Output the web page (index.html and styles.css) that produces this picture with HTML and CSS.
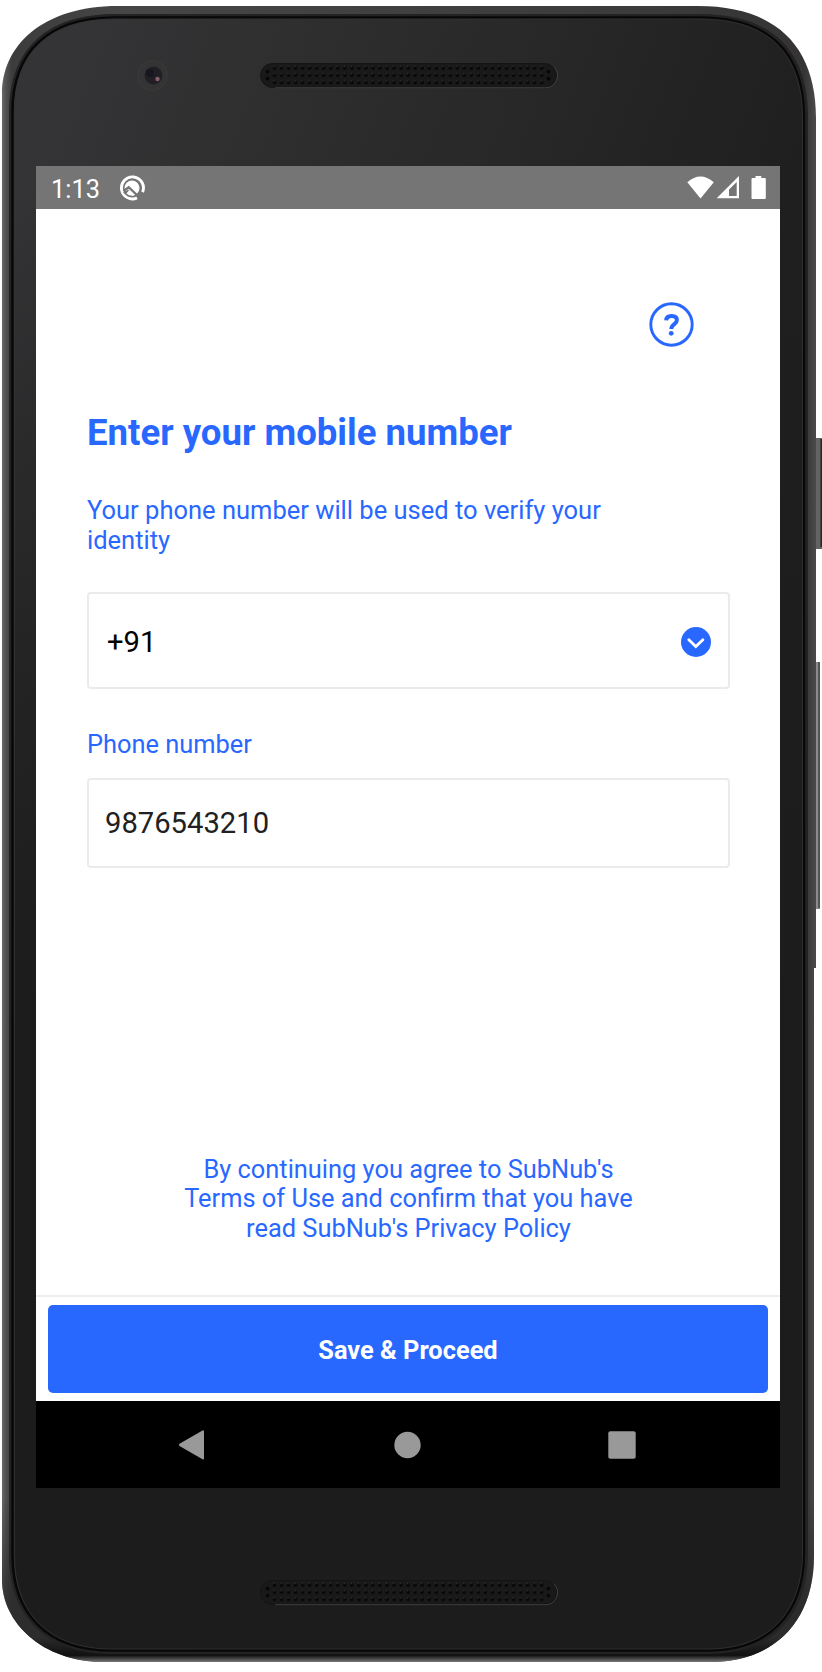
FILE: index.html
```html
<!DOCTYPE html>
<html lang="en">
<head>
<meta charset="utf-8">
<title>SubNub</title>
<link rel="stylesheet" href="styles.css">
</head>
<body>
<div class="phone">
  <svg class="shell" width="822" height="1672" viewBox="0 0 822 1672" aria-hidden="true">
    <defs>
      <linearGradient id="rim" x1="0" y1="0" x2="1" y2="0">
        <stop offset="0" stop-color="#6a6a6a"/><stop offset=".004" stop-color="#555556"/><stop offset=".012" stop-color="#3c3c3d"/>
        <stop offset=".15" stop-color="#464647"/><stop offset=".8" stop-color="#3b3b3b"/><stop offset=".985" stop-color="#353334"/><stop offset="1" stop-color="#4b4b4b"/>
      </linearGradient>
      <linearGradient id="low" x1="0" y1="0" x2="0" y2="1">
        <stop offset=".9" stop-color="#222" stop-opacity="0"/><stop offset=".985" stop-color="#2c2c2c"/><stop offset=".996" stop-color="#111"/><stop offset="1" stop-color="#777"/>
      </linearGradient>
      <linearGradient id="face" gradientUnits="userSpaceOnUse" x1="100" y1="0" x2="760" y2="260">
        <stop offset="0" stop-color="#343436"/><stop offset=".5" stop-color="#2a2a2a"/><stop offset="1" stop-color="#1f1f1f"/>
      </linearGradient>
      <linearGradient id="fade" x1="0" y1="0" x2="0" y2="1">
        <stop offset=".1" stop-color="#1c1c1c" stop-opacity="0"/><stop offset=".6" stop-color="#1c1c1c"/>
      </linearGradient>
      <pattern id="holes" x="271" y="0" width="7.03" height="7.2" patternUnits="userSpaceOnUse">
        <circle cx="3.5" cy="3.6" r="1.9" fill="#070707"/><circle cx="3" cy="2" r=".7" fill="#3a3a3a"/>
      </pattern>
      <g id="speaker">
        <rect x="260.5" y=".5" width="296" height="24" rx="12" fill="#191919" stroke="#141414"/>
        <path d="M275 24.700H544.500A12.200 12.200 0 0 0 554 4" fill="none" stroke="#484848" stroke-width=".8"/>
        <g transform="translate(0 1.500)"><rect x="271" y="0" width="274.100" height="21.600" fill="url(#holes)"/></g>
        <g fill="#070707"><circle cx="267.500" cy="8.700" r="1.900"/><circle cx="267.500" cy="15.700" r="1.900"/><circle cx="548.500" cy="8.700" r="1.900"/><circle cx="548.500" cy="15.700" r="1.900"/></g>
      </g>
    </defs>
    <path d="M815 438h7v111h-7z" fill="#636363"/><path d="M820.500 439h1.500v108h-1.500z" fill="#252525"/>
    <path d="M815 662h5v247h-5z" fill="#8c8c8c"/><path d="M818 662h2v246h-2z" fill="#555"/>
    <path d="M118 6H698C776 6 816 46 816 118V968H814V1556C814 1622 774 1662 710 1662H104C42 1662 2 1622 2 1580V94C2 46 42 6 118 6Z" fill="url(#rim)"/>
    <path d="M118 6H698C776 6 816 46 816 118V968H814V1556C814 1622 774 1662 710 1662H104C42 1662 2 1622 2 1580V94C2 46 42 6 118 6Z" fill="url(#low)"/>
    <path d="M115 14H700C772 14 808 50 808 118V1552C808 1617 772 1654 708 1654H112C46 1654 9 1617 9 1555V112C9 50 46 14 115 14Z" fill="#242324"/>
    <path d="M115 17.500H700C769 17.500 804 52 804 118V1552C804 1615 768 1650.500 708 1650.500H112C48 1650.500 12.500 1615 12.500 1555V112C12.500 52 48 17.500 115 17.500Z" fill="url(#face)" stroke="#080808" stroke-width="2.500"/>
    <path d="M115 19H700C768 19 802.500 53 802.500 118V1552C802.500 1614 767 1649 708 1649H112C49 1649 14.500 1614 14.500 1555V112C14.500 53 49 19 115 19Z" fill="url(#fade)" stroke="#343434" stroke-width=".8"/>
    <circle cx="152.500" cy="75.500" r="15" fill="#343435" stroke="#3a3a3a"/>
    <circle cx="153.500" cy="75.500" r="9" fill="#211f25"/>
    <circle cx="150" cy="73" r="4" fill="#17171e"/>
    <circle cx="157.500" cy="79" r="2.200" fill="#86606a"/>
    <use href="#speaker" y="63"/>
    <use href="#speaker" y="1580"/>
  </svg>

  <main class="screen">
    <header class="status">
      <span class="clock">1:13</span>
      <svg class="app-icon" width="26" height="26" viewBox="0 0 26 26">
        <path d="M18 22.900A11 11 0 1 1 23.600 17.100" fill="none" stroke="#fff" stroke-width="2.900"/>
        <circle cx="13" cy="13" r="7.500" fill="#fff"/>
        <path d="M4.500 16L9.700 12.200L20.500 22.500" fill="none" stroke="#757575" stroke-width="2.300"/>
        <path d="M4 17.500L9.500 14.500L14.500 21.500L9 21.500Z" fill="#757575"/>
        <path d="M7.500 18.500L10 15.200L15.500 20.500Q10.500 21.500 7.500 18.500Z" fill="#fff"/>
      </svg>
      <svg class="signals" width="80" height="25" viewBox="0 0 80 25">
        <path d="M.3 7.300Q13.500-4.300 26.800 7.300L13.500 23.500Z" fill="#fff"/>
        <path d="M29.700 23.300L52 1V23.300ZM42 21H49.700V7L42 14.600Z" fill="#fff" fill-rule="evenodd"/>
        <path d="M68.500 1H74.300V3h3.500q1 0 1 1V23q0 1-1 1H65.500q-1 0-1-1V4q0-1 1-1h3Z" fill="#fff"/>
      </svg>
    </header>

    <section class="form">
      <svg class="help" width="45" height="45" viewBox="0 0 45 45">
        <circle cx="22.500" cy="22.500" r="20.700" fill="none" stroke="#2968ff" stroke-width="2.900"/>
        <path d="M17.200 18.400Q17.300 13.900 22.600 13.900Q27.900 14 27.900 18Q27.900 20.200 25.300 22.200Q22.400 24.300 22.300 27" fill="none" stroke="#2968ff" stroke-width="4"/>
        <circle cx="22.200" cy="31.300" r="2.400" fill="#2968ff"/>
      </svg>
      <h1 class="title">Enter your mobile number</h1>
      <p class="intro">Your phone number will be used to verify your<br>identity</p>
      <div class="field code">
        <span>+91</span>
        <svg width="30" height="30" viewBox="0 0 30 30"><circle cx="15" cy="15" r="15" fill="#2968ff"/><path d="M7.800 12.800L14.800 19.500L21.900 12.800" fill="none" stroke="#fff" stroke-width="2.800" stroke-linecap="round"/></svg>
      </div>
      <p class="label">Phone number</p>
      <div class="field number">9876543210</div>
      <p class="terms">By continuing you agree to SubNub's<br>Terms of Use and confirm that you have<br>read SubNub's Privacy Policy</p>
    </section>

    <footer class="action"><div class="proceed">Save &amp; Proceed</div></footer>
    <nav class="nav">
      <svg width="28" height="30" viewBox="0 0 28 30"><path d="M1.500 13.700L24.500 .4Q26 0 26 1.500V28.500Q26 30 24.500 29.300L1.500 16Q0 15 1.500 13.700Z" fill="#999"/></svg>
      <svg width="28" height="28" viewBox="0 0 28 28"><circle cx="14.500" cy="14" r="13.200" fill="#999"/></svg>
      <svg width="28" height="28" viewBox="0 0 28 28"><rect x=".3" y=".3" width="27.400" height="27.400" rx="2" fill="#999"/></svg>
    </nav>
  </main>
</div>
</body>
</html>
```
FILE: styles.css
```css
* { box-sizing: border-box; }
body { margin: 0; background: #fff; font-family: Roboto, "Liberation Sans", sans-serif; }
.phone { position: relative; width: 822px; height: 1672px; padding: 166px 42px 184px 36px; overflow: hidden; }
.shell { position: absolute; inset: 0; }
.screen { position: relative; display: flex; flex-direction: column; width: 744px; height: 1322px; background: #fff; font-size: 25.4px; line-height: 29.7px; }
.status { display: flex; align-items: center; height: 43px; padding: 0 13px 0 15px; background: #757575; color: #fff; }
.clock { width: 68px; padding-top: 4px; }
.signals { margin-left: auto; }
.form { display: flex; flex: 1; flex-direction: column; padding: 93px 50px 0 51px; color: #2968ff; }
.help { align-self: flex-end; margin-right: 36px; }
.title { margin: 64px 0 0; font-size: 36.600px; font-weight: 700; line-height: 44px; }
.intro { margin: 40px 0 0; height: 60px; font-size: 25.5px; line-height: 30px; white-space: nowrap; }
.field { display: flex; align-items: center; border: 2px solid #ebebeb; border-radius: 4px; font-size: 29.2px; }
.code { height: 97px; margin-top: 37px; padding: 3px 17px 0 18px; justify-content: space-between; color: #000; }
.code span { padding-top: 1px; }
.label { margin: 41px 0 0; }
.number { height: 90px; margin-top: 18px; padding: 3px 16px 0; color: #212121; }
.terms { margin: 287px 0 0; text-align: center; white-space: nowrap; }
.action { height: 106px; padding: 8px 12px; border-top: 2px solid #eee; }
.proceed { display: flex; align-items: center; justify-content: center; height: 88px; padding-top: 3px; border-radius: 5px; background: #2968ff; color: #fff; font-weight: 700; }
.nav { display: flex; align-items: center; justify-content: space-between; height: 87px; padding: 0 144px 0 142px; background: #000; }
```
